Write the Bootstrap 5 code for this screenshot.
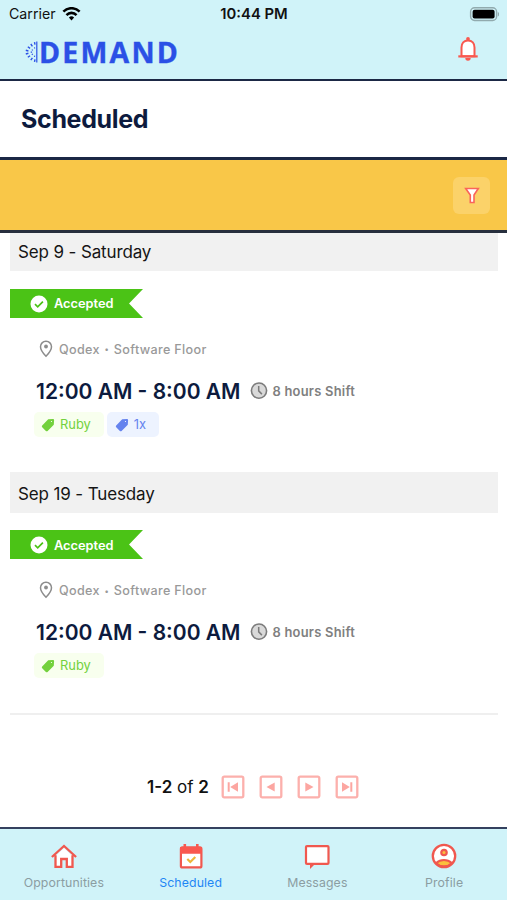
<!DOCTYPE html>
<html lang="en">
<head>
<meta charset="utf-8">
<meta name="viewport" content="width=device-width, initial-scale=1">
<title>Scheduled</title>
<link href="https://cdn.jsdelivr.net/npm/bootstrap@5.3.0/dist/css/bootstrap.min.css" rel="stylesheet">
<style>
  :root { --sky: #d0f3f9; --ink: #0d1b3e; --coral: #f9584f; --rule: #1b2845; }
  body { font-family: Inter, "Liberation Sans", sans-serif; color: #111; line-height: 1; }
  svg { display: block; flex: none; }
  .phone { height: 900px; }
  .app-top { height: 81px; background: var(--sky); border-bottom: 2px solid var(--rule); }
  .status { height: 28px; font-size: 14.2px; padding: 0 8px 0 9px; }
  .status > * { flex: 1 1 0; }
  .carrier { gap: 6px; }
  .clock-time { font-weight: 600; font-size: 14.8px; }
  .brand-row { height: 48px; padding: 0 27px 0 24px; }
  .brand-name { font: 700 28.5px/1 "Open Sans", sans-serif; letter-spacing: 2.2px; margin-left: -1px; color: #2b50e6; -webkit-text-stroke: .4px #2b50e6; }
  .bell { margin-bottom: 7px; }
  .page-title { height: 79px; border-bottom: 3px solid var(--rule); padding: 1px 21px 0; }
  .page-title h1 { font-size: 25px; font-weight: 700; color: var(--ink); letter-spacing: -.35px; line-height: 1; }
  .filter-bar { height: 73px; background: #f9c748; border-bottom: 3px solid #272f3e; padding: 0 17px 0; }
  .filter-btn { width: 37px; height: 37px; border-radius: 6px; background: #fbd269; border: 0; }
  .shifts { margin: 0 9px 0 10px; border-bottom: 2px solid #efefef; height: 482px; }
  .day { height: 41px; background: #f1f1f1; padding: 3px 8px 0; font-size: 17px; letter-spacing: -.13px; color: #151515; }
  .day-first { height: 38px; padding-top: 0; }
  .ribbon { width: 133px; height: 29px; margin-top: 18px; padding-left: 20px; gap: 6px; background: #4bc316; color: #fff; font-size: 12.8px; font-weight: 600;
    clip-path: polygon(0 0, 100% 0, 89.5% 50%, 100% 100%, 0 100%); }
  .ribbon span, .tag span { padding-top: 1px; }
  .place > span, .length { padding-top: 2px; }
  .place { height: 20px; margin: 21px 0 0 29px; gap: 6px; color: #999; font-size: 12.6px; font-weight: 500; letter-spacing: .33px; white-space: pre; }
  .dot { font-size: 8px; position: relative; top: -1.5px; margin: 0 1px; }
  .hours { height: 24px; margin: 20px 0 0 26px; }
  .hours strong { font-size: 21px; font-weight: 600; color: var(--ink); margin-right: 2px; }
  .length { font-size: 12.9px; font-weight: 600; color: #808080; letter-spacing: .25px; }
  .tags { margin: 9px 0 0 24px; gap: 3px; height: 25px; }
  .tag { height: 25px; border-radius: 5px; gap: 5px; font-size: 12.9px; padding: 0 13px 0 7px; }
  .tag-ruby { color: #73d13d; background: #f8ffee; }
  .tag-count { color: #6583ee; background: #edf3ff; padding-left: 8px; }
  .second-day { margin-top: 35px; }
  .second-day + article .ribbon { margin-top: 17px; }
  .second-day + article .ribbon span, .second-day + article .place > span { padding-top: 3px; }
  .pager { height: 110px; padding: 34px 0 0 147px; font-size: 17px; }
  .pager b { font-weight: 600; }
  .pager-count { width: 73.5px; white-space: nowrap; }
  .pager-buttons { gap: 14px; }
  .tabs-bottom { height: 73px; background: var(--sky); border-top: 2px solid #34415f; }
  .tab-item { flex: 1 1 0; gap: 5px; padding: 14px 0 0 1px; font-size: 12.3px; color: #8b9da2; letter-spacing: .11px; text-decoration: none; line-height: 15px; }
  .tab-item.current { color: #1e86f5; }
</style>
</head>
<body class="bg-white">
<svg width="0" height="0" class="position-absolute" aria-hidden="true">
  <symbol id="check" viewBox="0 0 18 18"><circle cx="9" cy="9" r="8.500" fill="#fff"/><path d="M5 9.200l2.700 2.600 5.200-5.200" fill="none" stroke="#4bc316" stroke-width="1.700"/></symbol>
  <symbol id="pin" viewBox="0 0 14 18"><path d="M7 1.300A5.400 5.400 0 0 0 1.500 6.800C1.500 10.700 7 16.300 7 16.300s5.500-5.600 5.500-9.500A5.400 5.400 0 0 0 7 1.300z" fill="none" stroke="#8c8c8c" stroke-width="1.500"/><circle cx="7" cy="6.500" r="1.900" fill="#8c8c8c"/></symbol>
  <symbol id="clock" viewBox="0 0 18 18"><circle cx="9" cy="8.600" r="7.600" fill="#d9d9d9" stroke="#7c7c7c" stroke-width="1.600"/><path d="M8.700 3.900v5l3.200 3.200" fill="none" stroke="#7c7c7c" stroke-width="1.500"/></symbol>
  <symbol id="label" viewBox="0 0 14 14"><path d="M7.200 1.200l4.600-.3a1.200 1.200 0 0 1 1.300 1.300l-.3 4.600L6.600 12.900a1.200 1.200 0 0 1-1.700 0L1.200 9.200a1.200 1.200 0 0 1 0-1.700z" fill="currentColor"/><circle cx="10.500" cy="3.500" r=".6" fill="#fff"/></symbol>
  <symbol id="prev" viewBox="0 0 24 24"><rect x="1.700" y="1.700" width="20.600" height="20.600" rx="1.500" fill="none" stroke="#fcb0ac" stroke-width="2.300"/><path d="M15.700 7.400v9.200L7.500 12z" fill="#fca6a1"/></symbol>
  <symbol id="first" viewBox="0 0 24 24"><rect x="1.700" y="1.700" width="20.600" height="20.600" rx="1.500" fill="none" stroke="#fcb0ac" stroke-width="2.300"/><path d="M17 7.200v9.600L9.200 12zM6.700 7.200h2v9.600h-2z" fill="#fca6a1"/></symbol>
</svg>
<main class="phone d-flex flex-column overflow-hidden">
  <header class="app-top">
    <div class="status d-flex align-items-center">
      <div class="carrier d-flex align-items-center"><span>Carrier</span>
        <svg width="19" height="14" viewBox="0 0 20 15"><g fill="none" stroke="#000" stroke-width="2.700"><path d="M1.300 5a12 12 0 0 1 17.400 0"/><path d="M4.600 8.600a7.500 7.500 0 0 1 10.800 0"/></g><path d="M7.200 11.300a4 4 0 0 1 5.600 0L10 14.500z"/></svg>
      </div>
      <div class="clock-time text-center">10:44 PM</div>
      <div><svg class="ms-auto" width="30" height="15" viewBox="0 0 30 15"><rect x="1.600" y=".7" width="26" height="12.800" rx="4" fill="#d0f3f9" stroke="#91aaae" stroke-width="1.400"/><rect x="3.600" y="2.700" width="22" height="8.800" rx="2" fill="#000"/><path d="M28.800 4.900a2.500 2.500 0 0 1 0 4.500z" fill="#91aaae"/></svg></div>
    </div>
    <div class="brand-row d-flex align-items-center justify-content-between">
      <div class="d-flex align-items-center">
        <svg width="16" height="24" viewBox="0 0 16 24"><g stroke="#2b50e6" fill="none"><path d="M12.800 1.500v21" stroke-width="1.200"/><path d="M10.500 2.200l.5 2.500M6.800 4l1.600 2.300M3.800 6.800l2.300 1.600M1.800 10.300l2.600.7M1.800 14l2.600-.7M3.800 17.300l2.300-1.600M6.800 20.100l1.600-2.300M10.500 21.900l.5-2.500" stroke-width="1.400"/><path d="M10.400 7.300l.4 1.200M7.800 9.600l1 .8M6.700 12.100h1.400M7.800 14.700l1-.8M10.400 16.900l.4-1.200" stroke-width="1.100"/></g></svg>
        <span class="brand-name">DEMAND</span>
      </div>
      <svg class="bell" width="24" height="26" viewBox="0 0 24 26"><path d="M5.500 20.300V11.500c0-4 2.400-7 6.500-7s6.500 3 6.500 7v8.800z" fill="#fff" stroke="#f9584f" stroke-width="2"/><path d="M2.300 20.400h19.400" stroke="#f9584f" stroke-width="2.200"/><circle cx="12" cy="3" r="1.900" fill="#f9584f"/><path d="M9.300 22h5.400a2.700 2.700 0 0 1-5.400 0z" fill="#f9584f"/></svg>
    </div>
  </header>
  <section class="page-title d-flex align-items-center"><h1 class="m-0">Scheduled</h1></section>
  <section class="filter-bar d-flex align-items-center justify-content-end">
    <button class="filter-btn btn p-0 d-flex align-items-center justify-content-center" aria-label="Filter"><svg width="16" height="17" viewBox="0 0 16 17"><path d="M1.700 1.500h12.600L10 8v7.500H6.300V8z" fill="#fff" stroke="#f9645a" stroke-width="1.600"/></svg></button>
  </section>
  <section class="shifts">
    <div class="day day-first d-flex align-items-center">Sep 9 - Saturday</div>
    <article>
      <div class="ribbon d-flex align-items-center"><svg width="18" height="18"><use href="#check"/></svg><span>Accepted</span></div>
      <div class="place d-flex align-items-center"><svg width="14" height="18"><use href="#pin"/></svg><span>Qodex <span class="dot">•</span> Software Floor</span></div>
      <div class="hours d-flex align-items-center"><strong>12:00 AM - 8:00 AM</strong><svg class="ms-2 me-1" width="18" height="18"><use href="#clock"/></svg><span class="length">8 hours Shift</span></div>
      <div class="tags d-flex"><span class="tag tag-ruby d-flex align-items-center"><svg width="14" height="14"><use href="#label"/></svg><span>Ruby</span></span><span class="tag tag-count d-flex align-items-center"><svg width="14" height="14"><use href="#label"/></svg><span>1x</span></span></div>
    </article>
    <div class="day second-day d-flex align-items-center">Sep 19 - Tuesday</div>
    <article>
      <div class="ribbon d-flex align-items-center"><svg width="18" height="18"><use href="#check"/></svg><span>Accepted</span></div>
      <div class="place d-flex align-items-center"><svg width="14" height="18"><use href="#pin"/></svg><span>Qodex <span class="dot">•</span> Software Floor</span></div>
      <div class="hours d-flex align-items-center"><strong>12:00 AM - 8:00 AM</strong><svg class="ms-2 me-1" width="18" height="18"><use href="#clock"/></svg><span class="length">8 hours Shift</span></div>
      <div class="tags d-flex"><span class="tag tag-ruby d-flex align-items-center"><svg width="14" height="14"><use href="#label"/></svg><span>Ruby</span></span></div>
    </article>
  </section>
  <nav class="pager d-flex align-items-center" aria-label="Pages">
    <div class="pager-count"><b>1-2</b> of <b>2</b></div>
    <div class="pager-buttons d-flex">
      <svg width="24" height="24"><use href="#first"/></svg>
      <svg width="24" height="24"><use href="#prev"/></svg>
      <svg width="24" height="24" viewBox="0 0 24 24"><use href="#prev" width="24" height="24" transform="matrix(-1 0 0 1 24 0)"/></svg>
      <svg width="24" height="24" viewBox="0 0 24 24"><use href="#first" width="24" height="24" transform="matrix(-1 0 0 1 24 0)"/></svg>
    </div>
  </nav>
  <nav class="tabs-bottom d-flex mt-auto">
    <a class="tab-item d-flex flex-column align-items-center"><svg width="28" height="27" viewBox="0 0 28 27"><path d="M5.500 13.300L14 5l8.500 8.300v11h-5.700V17h-5.600v7.300H5.500z" fill="#fff"/><path d="M1.900 14L14 3l12.100 11M5.500 12.300v11.500h5.700V16h5.600v7.800h5.700V12.300" fill="none" stroke="#f0584f" stroke-width="2.300"/></svg>Opportunities</a>
    <a class="tab-item current d-flex flex-column align-items-center"><svg width="28" height="27" viewBox="0 0 28 27"><rect x="3.900" y="4.400" width="20.500" height="20" rx="1.500" fill="#fff" stroke="#f0584f" stroke-width="2.200"/><path d="M3 4h22v6.800H3zM6.500 1h2.600v3.500H6.500zM19 1h2.600v3.500H19z" fill="#f9584f"/><path d="M10.300 16l3 3 5-5" fill="none" stroke="#edb637" stroke-width="2.200"/></svg>Scheduled</a>
    <a class="tab-item d-flex flex-column align-items-center"><svg width="28" height="27" viewBox="0 0 28 27"><path d="M7 21h5l-5 5z" fill="#f0584f"/><rect x="3" y="3.100" width="22.500" height="17.800" rx="1" fill="#fff" stroke="#f0584f" stroke-width="2.200"/></svg>Messages</a>
    <a class="tab-item d-flex flex-column align-items-center"><svg width="28" height="27" viewBox="0 0 28 27"><circle cx="14" cy="13" r="11.200" fill="#fff"/><path d="M6.200 20.100c4.500-4 11-4 15.600 0a11 11 0 0 1-15.600 0z" fill="#fac03d" stroke="#f0584f" stroke-width="2"/><circle cx="14" cy="9.500" r="2.700" fill="#fac03d" stroke="#f0584f" stroke-width="2.200"/><circle cx="14" cy="13" r="11.200" fill="none" stroke="#f0584f" stroke-width="2.300"/></svg>Profile</a>
  </nav>
</main>
<script src="https://cdn.jsdelivr.net/npm/bootstrap@5.3.0/dist/js/bootstrap.bundle.min.js"></script>
</body>
</html>
